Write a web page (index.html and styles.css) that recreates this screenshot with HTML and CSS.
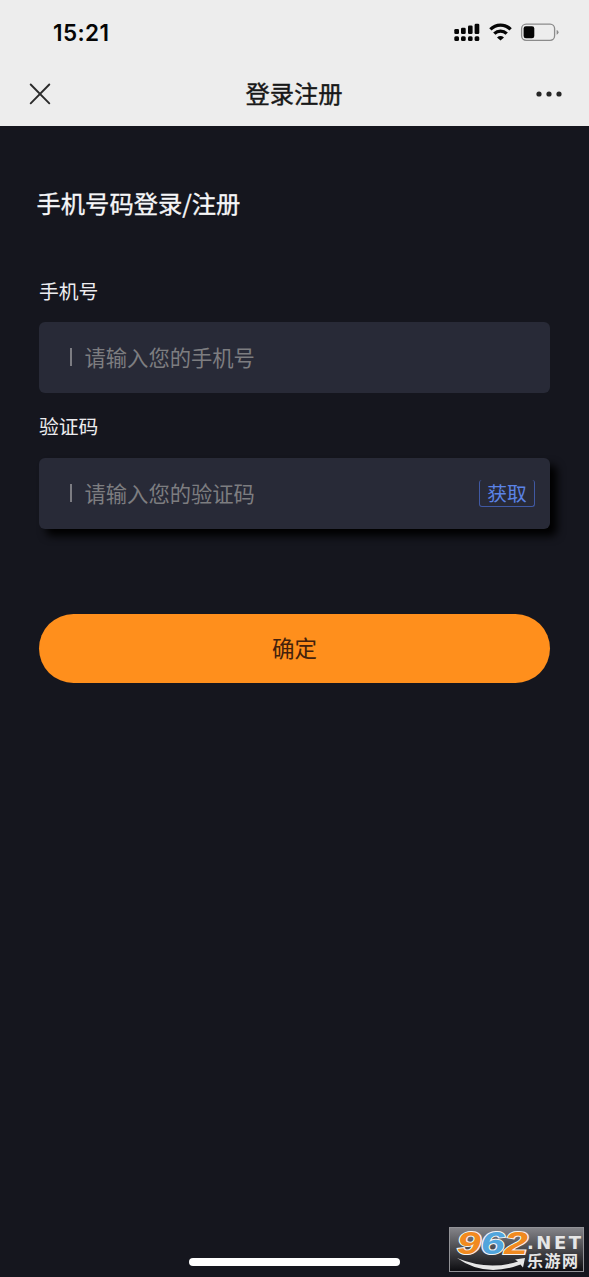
FILE: index.html
```html
<!DOCTYPE html>
<html lang="zh-CN">
<head>
<meta charset="utf-8">
<title>登录注册</title>
<link rel="stylesheet" href="styles.css">
</head>
<body>
<div class="screen">
  <header class="top">
    <div class="status">
      <span class="clock">15:21</span>
      <svg class="status-icons" width="106" height="20" viewBox="0 0 106 20">
        <g fill="#050505">
          <rect x="1.3" y="7" width="4.7" height="5" rx="1.3"/>
          <rect x="8" y="5.7" width="4.7" height="6.3" rx="1.3"/>
          <rect x="15" y="3.5" width="4.6" height="8.5" rx="1.3"/>
          <rect x="21.6" y="1.7" width="4.7" height="10.3" rx="1.3"/>
          <rect x="1.3" y="14.3" width="4.7" height="4.7" rx="1.5"/>
          <rect x="8" y="14.3" width="4.7" height="4.7" rx="1.5"/>
          <rect x="15" y="14.3" width="4.6" height="4.7" rx="1.5"/>
          <rect x="21.6" y="14.3" width="4.7" height="4.7" rx="1.5"/>
          <path d="M47.5 18.6 L44 15.4 Q47.500 12.500 51 15.400 Z"/>
          <rect x="70.6" y="4.2" width="10.7" height="12" rx="2.3"/>
          <path d="M103.6 8 Q105.5 8.5 105.5 10.3 Q105.5 12.1 103.6 12.7Z" fill="#8b8b8b"/>
        </g>
        <path d="M37.4 7.3 C43 1.6 52 1.6 57.6 7.3 M41.3 11.6 C44.8 8.2 50.2 8.2 53.7 11.6" fill="none" stroke="#050505" stroke-width="3.3"/>
        <rect x="68.6" y="2.1" width="33" height="16.2" rx="4.5" fill="none" stroke="#8b8b8b" stroke-width="1.3"/>
      </svg>
    </div>
    <div class="nav">
      <svg class="close" width="22" height="22" viewBox="0 0 22 22"><path d="M1.7 1.5 20.3 20.3M20.3 1.5 1.7 20.3" fill="none" stroke="#2b2b2b" stroke-width="1.9" stroke-linecap="round"/></svg>
      <h1 class="nav-title">登录注册</h1>
      <svg class="more" width="28" height="8" viewBox="0 0 28 8"><g fill="#262626"><circle cx="4" cy="4" r="2.6"/><circle cx="14" cy="4" r="2.6"/><circle cx="24" cy="4" r="2.6"/></g></svg>
    </div>
  </header>
  <main class="form">
    <h2 class="heading">手机号码登录/注册</h2>
    <div class="label">手机号</div>
    <div class="field"><span class="bar"></span><span class="hint">请输入您的手机号</span></div>
    <div class="label label-code">验证码</div>
    <div class="field field-code"><span class="bar"></span><span class="hint">请输入您的验证码</span><span class="get">获取</span></div>
    <div class="submit">确定</div>
  </main>
  <div class="home"></div>
  <div class="mark">
    <svg width="135" height="46" viewBox="0 0 135 46">
      <defs><linearGradient id="plate" x1="0" y1="0" x2="0" y2="1"><stop offset="0" stop-color="#85858a"/><stop offset=".5" stop-color="#48484c"/><stop offset="1" stop-color="#0c0c10"/></linearGradient></defs>
      <rect x=".5" y=".5" width="134" height="44" fill="url(#plate)" stroke="#929297"/>
      <path d="M8 31 Q39 44 69 34.500 L66 32.500 76 31 74 40.500 71.500 37.500 Q36 51 8 31Z" fill="#e6e6e6"/>
      <text class="digits" x="8" y="27" textLength="71" lengthAdjust="spacingAndGlyphs"><tspan fill="#f18a20">9</tspan><tspan fill="#51a5dc">6</tspan><tspan fill="#f18a20">2</tspan></text>
      <text class="net" x="78" y="22" textLength="54">.NET</text>
      <text class="site" x="78" y="39.500" textLength="51">乐游网</text>
    </svg>
  </div>
</div>
</body>
</html>
```
FILE: styles.css
```css
* { box-sizing: border-box; }
body { margin: 0; }
.screen {
  position: relative;
  width: 589px;
  height: 1277px;
  overflow: hidden;
  background: #15161e;
  font-family: Inter, "Noto Sans CJK SC", sans-serif;
}
.top { height: 125.500px; background: #ededed; }
.status {
  display: flex;
  justify-content: space-between;
  height: 64px;
  padding: 22px 30px 0 53px;
}
.clock { font-size: 22.500px; font-weight: 600; line-height: 22px; letter-spacing: 0.4px; color: #050505; }
.nav {
  display: flex;
  align-items: center;
  justify-content: space-between;
  height: 60px;
  padding: 0 26px 0 29px;
}
.close { margin-right: 2px; }
.nav-title {
  margin: -2px 0 0;
  font: 400 24.300px/36px "Noto Sans CJK SC", sans-serif;
  color: #181818;
  -webkit-text-stroke: 0.4px #181818;
}
.form {
  padding: 59.500px 39px 0;
  font-family: "Noto Sans CJK SC", sans-serif;
}
.heading {
  margin: 0 0 0 -2.500px;
  font-size: 24.300px;
  font-weight: 400;
  line-height: 36px;
  color: #f6f6f8;
  -webkit-text-stroke: 0.3px #f6f6f8;
}
.label { margin-top: 56px; font-size: 19.800px; line-height: 28px; color: #ececef; }
.label-code { margin-top: 19px; }
.field {
  display: flex;
  align-items: center;
  height: 71px;
  margin-top: 16.500px;
  padding: 0 15px 0 31px;
  border-radius: 6px;
  background: #282a37;
}
.field-code { margin-top: 18px; box-shadow: 7px 7px 8px #000; }
.bar { width: 1.500px; height: 18px; margin-right: 13px; background: #7c7c82; }
.hint { flex: 1; font-size: 21.300px; line-height: 30px; color: #7d7d80; }
.get {
  width: 56px;
  height: 27px;
  border: 1px solid #4059a3;
  border-top: 0;
  border-radius: 3px;
  font-size: 19.800px;
  line-height: 26px;
  text-align: center;
  color: #5b83e6;
}
.submit {
  height: 69px;
  margin-top: 85px;
  border-radius: 35px;
  background: #ff8f1c;
  font-size: 22.500px;
  line-height: 66px;
  text-align: center;
  color: #43210c;
}
.home {
  position: absolute;
  left: 189px;
  bottom: 11px;
  width: 211px;
  height: 8px;
  border-radius: 4px;
  background: #fff;
}
.mark { position: absolute; left: 449px; top: 1227px; width: 135px; height: 46px; }
.digits {
  font: italic 700 32px "Liberation Sans", sans-serif;
  stroke: #f3f3f3;
  stroke-width: 2px;
  paint-order: stroke;
}
.net { font: 700 18px "DejaVu Sans", sans-serif; fill: #e6e6e6; }
.site { font: 700 16px "Noto Sans CJK SC", sans-serif; fill: #e6e6e6; }
```
